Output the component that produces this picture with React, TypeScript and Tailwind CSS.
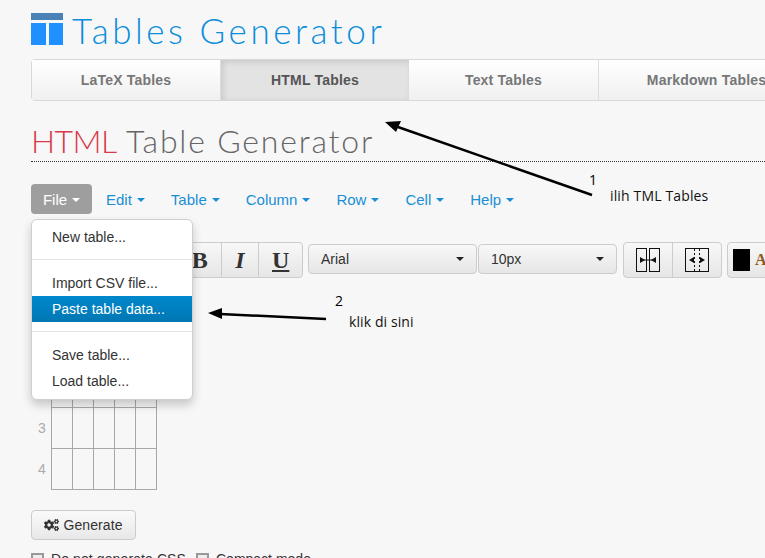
import { FaCogs } from "react-icons/fa";

const tabs = ["LaTeX Tables", "HTML Tables", "Text Tables", "Markdown Tables"];
const menus = ["Edit", "Table", "Column", "Row", "Cell", "Help"];

function Caret({ className }: { className: string }) {
  return <span className={`inline-block h-0 w-0 border-x-4 border-t-4 border-x-transparent ${className}`} />;
}

function MergeIcon() {
  return (
    <svg width="24" height="24" viewBox="0 0 24 24" fill="none">
      <rect x="0.5" y="0.5" width="10" height="23" stroke="#111" />
      <rect x="13.5" y="0.5" width="10" height="23" stroke="#111" />
      <path d="M4 12h16" stroke="#111" />
      <path d="M4 9l5 3-5 3zM20 9l-5 3 5 3z" fill="#111" />
    </svg>
  );
}

function SplitIcon() {
  return (
    <svg width="24" height="24" viewBox="0 0 24 24" fill="none">
      <rect x="0.5" y="0.5" width="23" height="23" stroke="#111" />
      <path d="M9.5 1v22M14.5 1v22" stroke="#111" strokeDasharray="2 2" />
      <path d="M9 9l-5 3 5 3zM15 9l5 3-5 3z" fill="#111" />
    </svg>
  );
}

export default function App() {
  return (
    <div className="relative h-[558px] w-[765px] overflow-hidden bg-[#f7f7f7] pl-[31px] font-['Liberation_Sans',sans-serif] text-sm text-[#333]">
      {/* logo */}
      <div className="flex h-[59px] items-start pt-[13px]">
        <div className="flex w-8 flex-col gap-[3px]">
          <div className="h-[7px] bg-[#4a82b8]" />
          <div className="flex h-[22px] gap-[3px]">
            <div className="w-[15px] bg-[#1e90ff]" />
            <div className="w-[14px] bg-[#1e90ff]" />
          </div>
        </div>
        <div className="ml-[9px] -mt-[3px] whitespace-nowrap font-['Lato',sans-serif] text-[35px] leading-[40px] font-light tracking-[3.55px] text-[#0a8ddb]">
          Tables Generator
        </div>
      </div>

      {/* tabs */}
      <div className="flex h-[42px] w-[820px] rounded border border-[#d8d8d8] font-bold tracking-[0.2px]">
        {tabs.map((t, i) => (
          <div
            key={t}
            className={
              i === 1
                ? "flex w-[188px] items-center justify-center bg-[#e3e3e3] text-[#555] shadow-[inset_2px_2px_6px_rgba(0,0,0,0.12)]"
                : i === 3
                  ? "flex w-[216px] items-center justify-center border-r border-[#dddddd] bg-gradient-to-b from-white to-[#f0f0f0] text-[#777]"
                  : i === 2
                    ? "flex w-[190px] items-center justify-center border-r border-[#dddddd] bg-gradient-to-b from-white to-[#f0f0f0] text-[#777]"
                    : "flex w-[189px] items-center justify-center border-r border-[#dddddd] bg-gradient-to-b from-white to-[#f0f0f0] text-[#777]"
            }
          >
            {t}
          </div>
        ))}
      </div>

      {/* heading */}
      <div className="mt-[21px] h-10 w-[734px] border-b border-dotted border-[#333] font-['Lato',sans-serif] text-[32px] leading-[38px] font-light tracking-[1.8px] whitespace-nowrap text-[#666]">
        <span className="tracking-[-0.6px] text-[#d8394c]">HTML</span> Table Generator
      </div>

      {/* menu bar */}
      <div className="mt-[22px] flex h-[30px] items-center text-[15px] text-[#1a8fd6]">
        <div className="flex h-[30px] w-[61px] items-center justify-center gap-[5px] rounded bg-[#9e9e9e] pt-[2px] text-white">
          File <Caret className="border-t-white" />
        </div>
        <div className="ml-[14px] flex gap-[26px] pt-[2px]">
          {menus.map((m) => (
            <div key={m} className="flex items-center gap-[5px]">
              {m} <Caret className="border-t-[#1a8fd6]" />
            </div>
          ))}
        </div>
      </div>

      {/* toolbar */}
      <div className="mt-7 flex h-9 items-start">
        <div className="ml-[147px] flex h-9 w-[125px] shrink-0 rounded border border-[#cccccc] bg-gradient-to-b from-[#f8f8f8] to-[#e6e6e6] font-['Liberation_Serif',serif] text-2xl leading-none font-bold text-[#333]">
          <div className="flex w-[42px] items-center justify-center">B</div>
          <div className="flex w-[38px] items-center justify-center border-l border-[#cccccc] italic">I</div>
          <div className="flex w-[44px] items-center justify-center border-l border-[#cccccc] underline">U</div>
        </div>
        <div className="mt-[2px] ml-[5px] flex h-[30px] w-[169px] shrink-0 items-center justify-between rounded border border-[#cccccc] bg-gradient-to-b from-[#f8f8f8] to-[#e6e6e6] px-3">
          Arial <Caret className="border-t-[#222]" />
        </div>
        <div className="mt-[2px] ml-px flex h-[30px] w-[139px] shrink-0 items-center justify-between rounded border border-[#cccccc] bg-gradient-to-b from-[#f8f8f8] to-[#e6e6e6] px-3">
          10px <Caret className="border-t-[#222]" />
        </div>
        <div className="ml-[6px] flex h-9 w-[99px] shrink-0 rounded border border-[#cccccc] bg-gradient-to-b from-[#f8f8f8] to-[#e6e6e6]">
          <div className="flex w-[49px] items-center justify-center border-r border-[#cccccc]"><MergeIcon /></div>
          <div className="flex flex-1 items-center justify-center"><SplitIcon /></div>
        </div>
        <div className="ml-[5px] flex h-9 w-[60px] shrink-0 items-center rounded border border-[#cccccc] bg-gradient-to-b from-[#f8f8f8] to-[#e6e6e6] pl-[5px]">
          <div className="h-[22px] w-[17px] bg-black" />
          <span className="ml-[5px] font-['Liberation_Serif',serif] text-base font-bold text-[#8a5a20]">A</span>
        </div>
      </div>

      {/* table */}
      <div className="mt-[47px] flex">
        <div className="flex w-5 flex-col text-[#aaa]">
          {[1, 2, 3, 4].map((n) => (
            <div key={n} className="flex h-[41px] items-center pl-[7px]">{n}</div>
          ))}
        </div>
        <div className="grid h-[165px] w-[106px] grid-cols-5 grid-rows-4 border-t border-l border-[#a8a8a8]">
          {Array.from({ length: 20 }).map((_, i) => (
            <div key={i} className="border-r border-b border-[#a8a8a8]" />
          ))}
        </div>
      </div>

      {/* generate */}
      <div className="mt-5 flex h-[30px] w-[105px] items-center justify-center gap-1 rounded border border-[#cccccc] bg-gradient-to-b from-[#fafafa] to-[#e8e8e8] tracking-[0.1px]">
        <FaCogs className="h-[14px] w-[15px] text-[#333]" /> Generate
      </div>
      <div className="mt-[9px] flex items-start">
        <span className="mt-1 h-[13px] w-[13px] border-2 border-[#999] bg-[#eee]" />
        <span className="ml-[7px] tracking-[0.1px]">Do not generate CSS</span>
        <span className="mt-1 ml-[10px] h-[13px] w-[13px] border-2 border-[#999] bg-[#eee]" />
        <span className="ml-[7px]">Compact mode</span>
      </div>

      {/* dropdown */}
      <div className="absolute top-[219px] left-[31px] flex h-[181px] w-[162px] flex-col rounded-md border border-[#cfcfcf] bg-white py-1 text-[#333] shadow-[0_5px_10px_rgba(0,0,0,0.2)]">
        <div className="flex h-[26px] items-center pl-5">New table...</div>
        <div className="mt-[9px] mb-[10px] h-px bg-[#e5e5e5]" />
        <div className="flex h-[26px] items-center pl-5">Import CSV file...</div>
        <div className="flex h-[26px] items-center bg-gradient-to-b from-[#0088cc] to-[#0077b3] pl-5 text-white">Paste table data...</div>
        <div className="mt-[9px] mb-[10px] h-px bg-[#e5e5e5]" />
        <div className="flex h-[26px] items-center pl-5">Save table...</div>
        <div className="flex h-[26px] items-center pl-5">Load table...</div>
      </div>

      {/* annotations */}
      <svg className="absolute top-0 left-0" width="765" height="558" fill="none">
        <path d="M592 195L398 127" stroke="#000" strokeWidth="2.5" />
        <path d="M385 122L401 121L396 132z" fill="#000" />
        <path d="M326 319L220 314" stroke="#000" strokeWidth="2.5" />
        <path d="M208 313L222 308L222 319z" fill="#000" />
      </svg>
      <div className="absolute top-[170px] left-[589px] font-['Open_Sans',sans-serif] text-sm text-black">1</div>
      <div className="absolute top-[186px] left-[610px] font-['Open_Sans',sans-serif] text-sm tracking-[0.15px] whitespace-nowrap text-[#111]">ilih TML Tables</div>
      <div className="absolute top-[291px] left-[335px] font-['Open_Sans',sans-serif] text-sm text-black">2</div>
      <div className="absolute top-[312px] left-[349px] font-['Open_Sans',sans-serif] text-sm tracking-[0.1px] whitespace-nowrap text-[#111]">klik di sini</div>
    </div>
  );
}
